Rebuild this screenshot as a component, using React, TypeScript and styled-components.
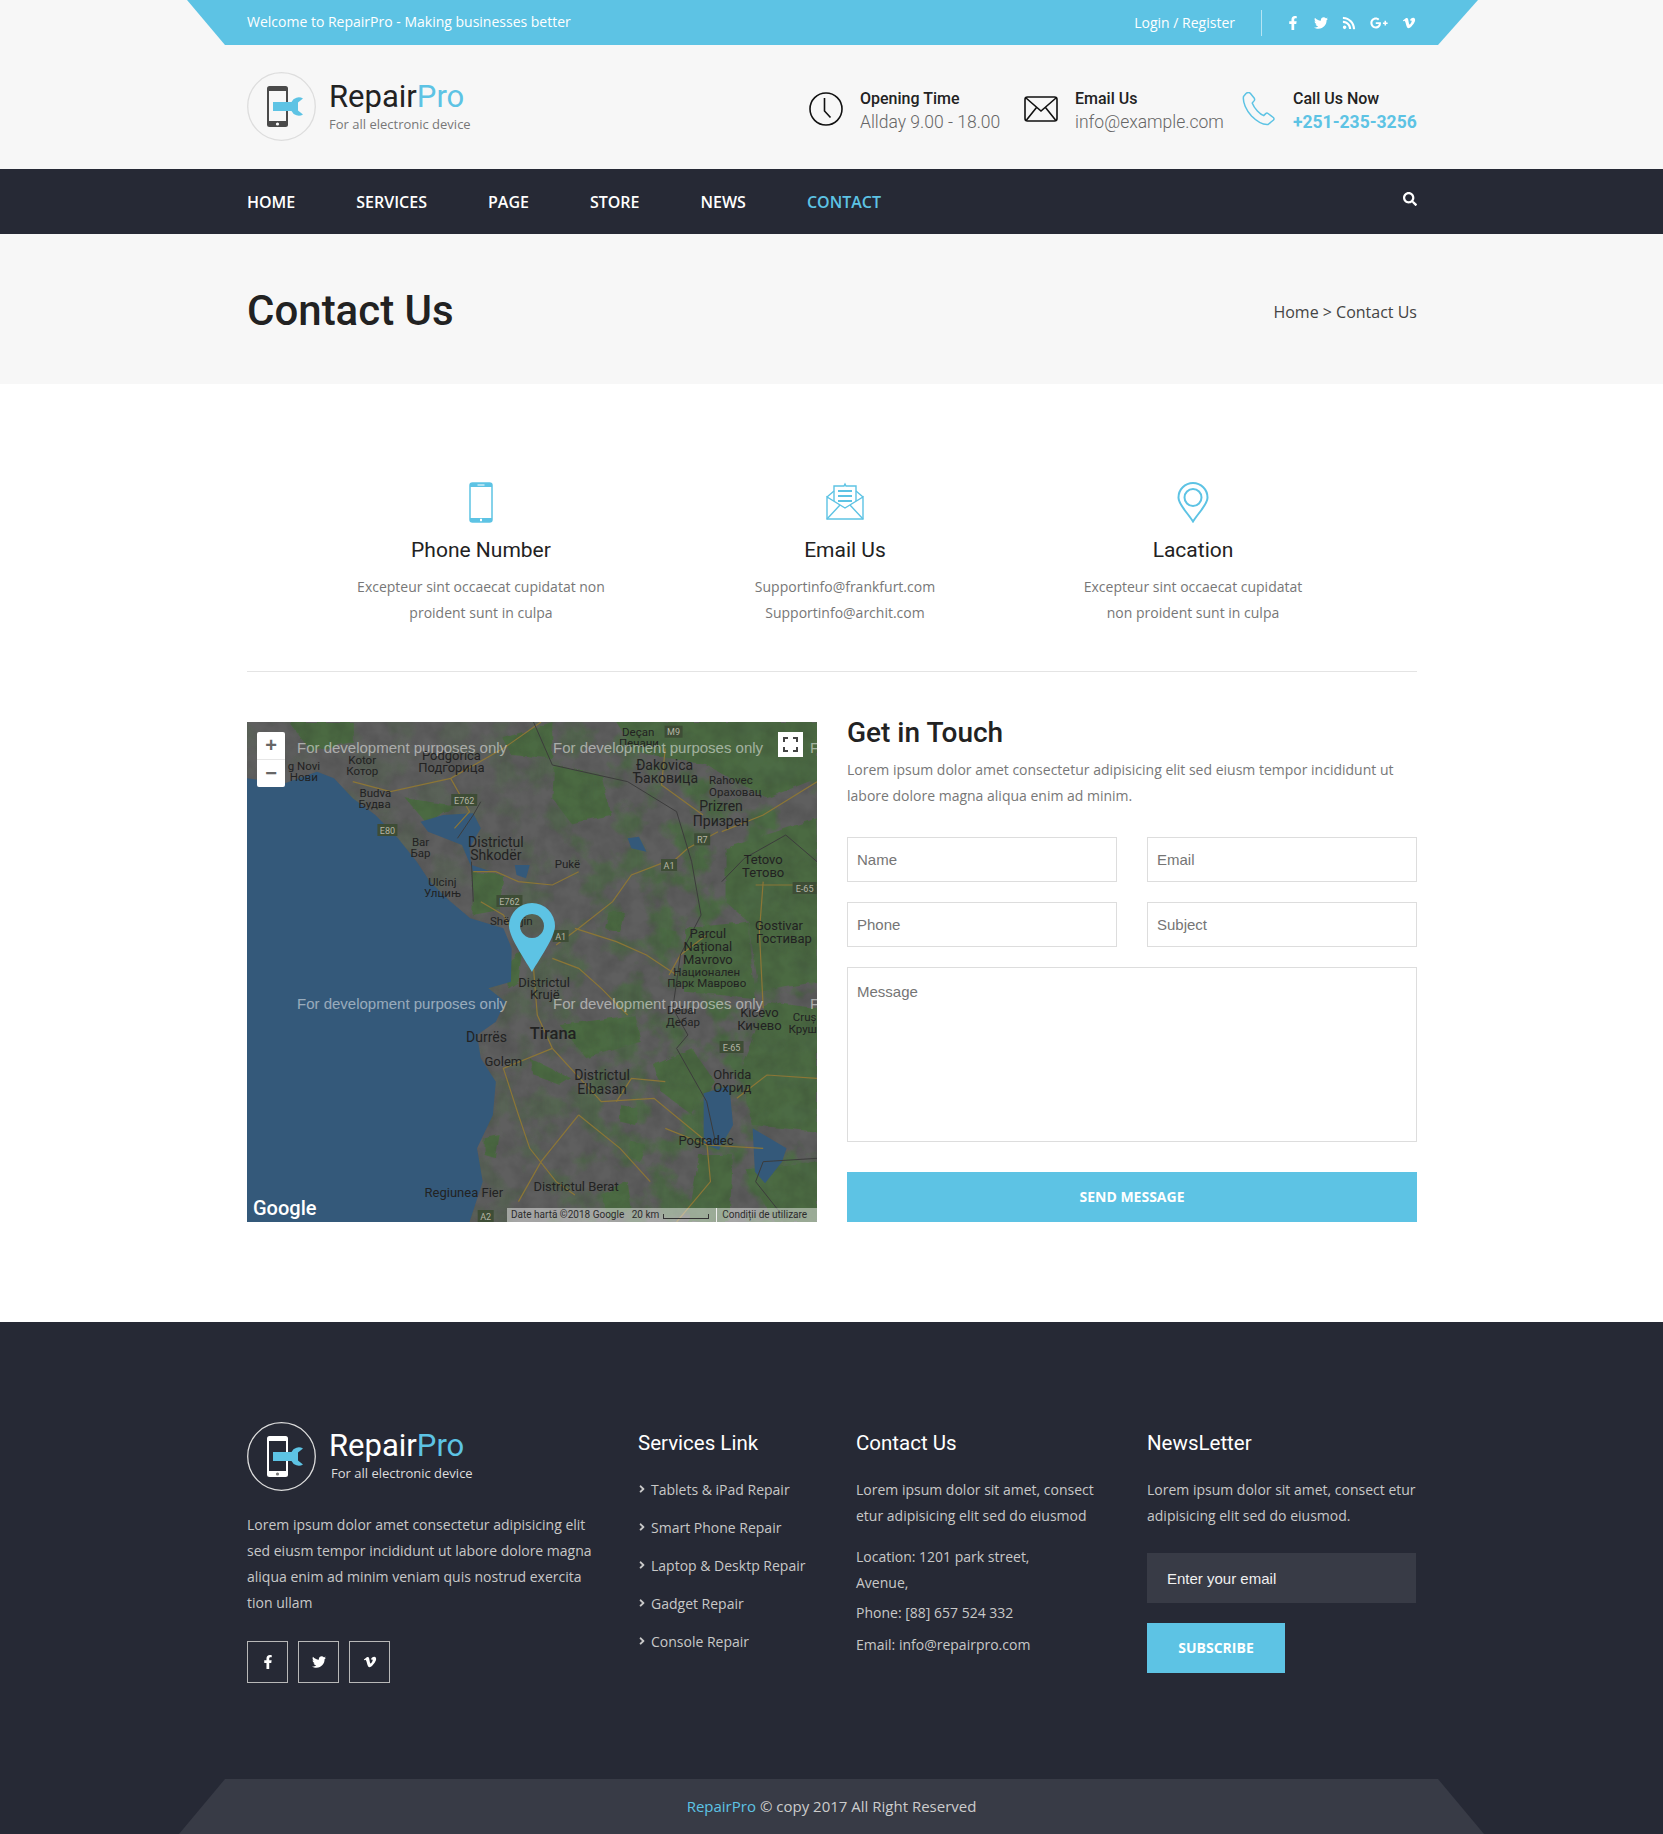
import React from "react"
import styled, { createGlobalStyle } from "styled-components"
import {
  FaAngleRight,
  FaFacebookF,
  FaGooglePlusG,
  FaRss,
  FaSearch,
  FaTwitter,
  FaVimeoV,
} from "react-icons/fa"

const cyan = "#5dc3e4"
const dark = "#262935"
const heading = `"Roboto", "Open Sans", sans-serif`

const GlobalStyle = createGlobalStyle`
  * { box-sizing: border-box; }
  body {
    margin: 0;
    background: #fff;
    color: #777;
    font-family: "Open Sans", sans-serif;
    font-size: 14px;
  }
  ul { list-style: none; margin: 0; padding: 0; }
  p, h1, h2, h3, h4 { margin: 0; }
`

const Page = styled.div`
  width: 1663px;
  height: 1834px;
  overflow: hidden;
`

const Container = styled.div`
  width: 1170px;
  margin-left: 247px;
`

/* top strip */
const TopArea = styled.div`
  background: #f7f7f7;
`

const TopBar = styled.div`
  width: 1291px;
  height: 45px;
  margin-left: 187px;
  padding: 0 62px 0 60px;
  display: flex;
  align-items: center;
  justify-content: space-between;
  background: ${cyan};
  color: #fff;
  clip-path: polygon(0 0, 100% 0, 1251px 100%, 38px 100%);
`

const Welcome = styled.span`
  margin-top: -2px;
`

const TopRight = styled.div`
  display: flex;
  align-items: center;
`

const Login = styled.span`
  padding-right: 26px;
  margin-right: 24px;
  line-height: 26px;
  border-right: 1px solid rgba(255, 255, 255, 0.55);
`

const TopIcons = styled.div`
  display: flex;
  align-items: center;
  gap: 14px;
  font-size: 14px;

  svg {
    display: block;
  }
`

const Header = styled(Container)`
  height: 124px;
  display: flex;
  align-items: center;
  justify-content: space-between;
`

const Brand = styled.div`
  display: flex;
  align-items: center;
  gap: 12px;
`

const BrandText = styled.div<{ $footer?: boolean }>`
  margin-top: ${(p) => (p.$footer ? "-6px" : "-4px")};

  strong {
    display: block;
    font-family: ${heading};
    font-size: 31px;
    font-weight: 400;
    line-height: 38px;
    color: ${(p) => (p.$footer ? "#fff" : "#222")};
  }

  strong span {
    color: ${cyan};
  }

  small {
    display: block;
    font-size: 13px;
    line-height: 16px;
    margin-left: ${(p) => (p.$footer ? "2px" : "0")};
    color: ${(p) => (p.$footer ? "#ddd" : "#777")};
  }
`

const HeaderInfo = styled.div`
  display: flex;
  align-items: center;
  margin-top: 3px;
`

const InfoItem = styled.div<{ $width: number }>`
  width: ${(p) => p.$width}px;
  display: flex;
  align-items: center;
`

const InfoIcon = styled.div`
  width: 51px;
  flex: none;

  svg {
    display: block;
  }
`

const InfoText = styled.div`
  margin-top: 4px;
  font-family: ${heading};

  b {
    display: block;
    font-size: 16px;
    line-height: 22px;
    font-weight: 500;
    color: #222;
  }

  span {
    display: block;
    font-size: 17.5px;
    line-height: 24px;
    font-weight: 300;
    color: #666;
    white-space: nowrap;
  }

  em {
    display: block;
    font-size: 17.5px;
    line-height: 24px;
    font-style: normal;
    font-weight: 700;
    color: ${cyan};
    white-space: nowrap;
  }
`

const NavBar = styled.nav`
  height: 65px;
  background: ${dark};
`

const NavInner = styled(Container)`
  height: 100%;
  display: flex;
  align-items: center;
  justify-content: space-between;
`

const NavList = styled.ul`
  display: flex;
  gap: 61px;
`

const NavItem = styled.li<{ $active?: boolean }>`
  font-size: 16px;
  font-weight: 600;
  color: ${(p) => (p.$active ? cyan : "#fff")};
`

const SearchBtn = styled.span`
  color: #fff;
  font-size: 14px;
  margin-top: -3px;
`

const TitleBand = styled.div`
  height: 150px;
  background: #f7f7f7;
`

const TitleInner = styled(Container)`
  height: 100%;
  display: flex;
  align-items: center;
  justify-content: space-between;
`

const PageTitle = styled.h1`
  margin-top: 3px;
  font-family: ${heading};
  font-size: 42px;
  font-weight: 500;
  color: #222;
`

const Crumb = styled.div`
  margin-top: 6px;
  font-size: 16px;
  color: #444;
`

/* contact cards */
const Features = styled(Container)`
  display: grid;
  grid-template-columns: 468px 260px 436px;
  padding-top: 98px;
  padding-bottom: 45px;
  border-bottom: 1px solid #e4e4e4;
`

const Feature = styled.div`
  text-align: center;

  svg {
    display: block;
    margin: 0 auto;
  }

  h3 {
    margin-top: 14px;
    font-family: ${heading};
    font-size: 21px;
    font-weight: 400;
    line-height: 26px;
    color: #222;
  }

  p {
    margin-top: 11px;
    line-height: 26px;
    color: #777;
  }
`

const ContactRow = styled(Container)`
  display: grid;
  grid-template-columns: 570px 570px;
  gap: 30px;
  padding-top: 50px;
  padding-bottom: 100px;
`

const MapBox = styled.div`
  position: relative;
  height: 500px;
  overflow: hidden;
  background: #606060;

  > svg {
    display: block;
  }
`

const ZoomControl = styled.div`
  position: absolute;
  left: 10px;
  top: 10px;
  width: 28px;
  height: 55px;
  display: flex;
  flex-direction: column;
  align-items: center;
  background: #fff;
  border-radius: 2px;
  color: #666;
  font: 700 20px/27px "Liberation Sans", sans-serif;

  span {
    width: 100%;
    flex: 1;
    text-align: center;
  }

  span + span {
    position: relative;
    border-top: 1px solid #e6e6e6;
  }
`

const FullScreen = styled.div`
  position: absolute;
  right: 14px;
  top: 10px;
  width: 25px;
  height: 25px;
  background: #fff;

  svg {
    display: block;
  }
`

const MapAttribution = styled.div`
  position: absolute;
  right: 0;
  bottom: 0;
  width: 310px;
  height: 14px;
  padding-left: 4px;
  display: flex;
  align-items: center;
  background: rgba(255, 255, 255, 0.45);
  color: #2c2c2c;
  font: 10px/14px "Roboto", sans-serif;
  white-space: nowrap;

  i {
    display: block;
    width: 46px;
    height: 5px;
    margin: 2px 7px 0 4px;
    border: 1px solid #333;
    border-top: 0;
  }

  u {
    text-decoration: none;
    padding-left: 5px;
    border-left: 1px solid #eee;
  }
`

const GoogleMark = styled.div`
  position: absolute;
  left: 6px;
  bottom: 2px;
  font: 500 20px/24px "Roboto", sans-serif;
  color: #fff;
`

const FormCol = styled.form`
  display: flex;
  flex-direction: column;
`

const FormTitle = styled.h2`
  font-family: ${heading};
  font-size: 28px;
  font-weight: 500;
  line-height: 22px;
  color: #222;
`

const FormText = styled.p`
  margin-top: 13px;
  line-height: 26px;
  color: #777;
`

const FieldGrid = styled.div`
  margin-top: 28px;
  display: grid;
  grid-template-columns: 270px 270px;
  gap: 20px 30px;
`

const Field = styled.input`
  height: 45px;
  padding: 0 9px;
  border: 1px solid #ddd;
  border-radius: 0;
  outline: 0;
  font: 15px "Liberation Sans", sans-serif;

  &::placeholder {
    color: #757575;
    opacity: 1;
  }
`

const MessageField = styled.textarea`
  grid-column: 1 / 3;
  height: 175px;
  padding: 15px 9px;
  resize: none;
  border: 1px solid #ddd;
  outline: 0;
  font: 15px "Liberation Sans", sans-serif;

  &::placeholder {
    color: #757575;
    opacity: 1;
  }
`

const SendButton = styled.button`
  margin-top: 30px;
  height: 50px;
  padding-bottom: 3px;
  border: 0;
  background: ${cyan};
  color: #fff;
  font: 700 14px "Open Sans", sans-serif;
`

/* footer */
const Footer = styled.footer`
  height: 512px;
  background: ${dark};
  color: #ccc;
`

const FooterGrid = styled(Container)`
  display: grid;
  grid-template-columns: 391px 218px 291px 270px;
  height: 457px;
  padding-top: 100px;
`

const FooterText = styled.p`
  line-height: 26px;
  color: #c8c8c8;
`

const FooterAbout = styled(FooterText)`
  width: 355px;
  margin-top: 20px;
`

const SocialRow = styled.div`
  margin-top: 25px;
  display: flex;
  gap: 10px;
`

const SocialBox = styled.span`
  width: 41px;
  height: 42px;
  display: flex;
  align-items: center;
  justify-content: center;
  border: 1px solid #b8b8b8;
  color: #fff;
  font-size: 14px;
`

const FooterHead = styled.h4`
  font-family: ${heading};
  font-size: 20.5px;
  font-weight: 400;
  line-height: 28px;
  margin-bottom: 20px;
  color: #fff;
`

const FooterColumn = styled.div`
  padding-top: 7px;
`

const LinkList = styled.ul`
  margin-top: -7px;
`

const LinkItem = styled.li`
  display: flex;
  align-items: center;
  gap: 3px;
  height: 38px;
  color: #c8c8c8;

  svg {
    font-size: 12px;
    margin-left: -2px;
  }
`

const FooterLine = styled.p<{ $gap: number }>`
  margin-top: ${(p) => p.$gap}px;
  line-height: 26px;
  color: #c8c8c8;
`

const EmailBox = styled.input`
  display: block;
  width: 269px;
  height: 50px;
  margin-top: 24px;
  padding: 0 20px;
  border: 0;
  outline: 0;
  border-radius: 0;
  background: #383b46;
  color: #eee;
  font: 15px "Liberation Sans", sans-serif;

  &::placeholder {
    color: #f0f0f0;
    opacity: 1;
  }
`

const SubscribeButton = styled.button`
  display: block;
  width: 138px;
  height: 50px;
  margin-top: 20px;
  padding-bottom: 3px;
  border: 0;
  background: ${cyan};
  color: #fff;
  font: 700 14px "Open Sans", sans-serif;
`

const Copyright = styled.div`
  height: 55px;
  padding-bottom: 2px;
  margin-left: 179px;
  width: 1305px;
  display: flex;
  align-items: center;
  justify-content: center;
  background: #383b46;
  color: #ccc;
  font-size: 15px;
  clip-path: polygon(46px 0, 1259px 0, 100% 100%, 0 100%);

  span {
    color: ${cyan};
    margin-right: 4px;
  }
`

type LogoProps = { $dark?: boolean }

const Logo = ({ $dark }: LogoProps) => (
  <svg width="70" height="70" viewBox="0 0 70 70">
    <circle cx="34.5" cy="34.5" r="33.8" fill="none" stroke="#ddd" strokeWidth="1.3" />
    <rect x="20" y="14" width="21" height="41" rx="2.5" fill={$dark ? "#fff" : "#4a4a4a"} />
    <rect x="22" y="19" width="17" height="30" fill={$dark ? dark : "#f7f7f7"} />
    <circle cx="30.5" cy="52" r="1.6" fill={$dark ? "#777" : "#fff"} />
    <path d="M26 30h18.500a8 8 0 0 1 11.500-3.500l-5 4v8l5 4a8 8 0 0 1-11.500-3.500H26z" fill={cyan} />
  </svg>
)

const ClockIcon = () => (
  <svg width="34" height="34" viewBox="0 0 34 34" fill="none" stroke="#111" strokeWidth="1.6">
    <circle cx="17" cy="17" r="16" />
    <path d="M15.5 6v13l6 6.5" />
  </svg>
)

const MailIcon = () => (
  <svg width="34" height="26" viewBox="0 0 34 26" fill="none" stroke="#111" strokeWidth="1.6">
    <rect x="1" y="1" width="32" height="24" rx="2.5" />
    <path d="M2 2l15 13L32 2M2.5 24l10-12.5M31.500 24l-10-12.500" />
  </svg>
)

const PhoneIcon = () => (
  <svg width="34" height="34" viewBox="0 0 34 34" fill="none" stroke={cyan} strokeWidth="1.5">
    <path d="M4 1.500 1.500 4.500c-1 6 3 14 8 19.500 5 5 11 9 16.500 8.500l5.500-4.500c.8-.8.6-1.800-.2-2.500l-5.300-4c-.8-.6-1.600-.5-2.300.1l-2 2c-3.500-1-9.500-7-11.500-12.500l2-2.500c.6-.8.6-1.500.1-2.300L8.500 1.500C7.500.4 5.500.4 4 1.500z" />
  </svg>
)

const MobileIcon = () => (
  <svg width="24" height="41" viewBox="0 0 24 41">
    <rect x="1" y="1" width="22" height="39" rx="2.500" fill="none" stroke={cyan} strokeWidth="1.5" />
    <path d="M1 3.500A2.500 2.500 0 0 1 3.500 1h17A2.500 2.500 0 0 1 23 3.500V5H1zM1 36h22v1.500a2.500 2.500 0 0 1-2.500 2.500h-17A2.500 2.500 0 0 1 1 37.500z" fill={cyan} />
    <rect x="8.500" y="2.500" width="7" height="1" fill="#fff" />
    <rect x="11" y="36.800" width="2" height="2.400" fill="#fff" />
  </svg>
)

const EnvelopeOpenIcon = () => (
  <svg width="38" height="41" viewBox="0 0 38 41" fill="none" stroke={cyan} strokeWidth="1.4">
    <path d="M1 15v22h36V15L19 26z" />
    <path d="M1 37l13-14M37 37 24 23" />
    <path d="M1 15l7-6M37 15l-7-6" />
    <path d="M8 19V4h10l1-2 1 2h10v15" />
    <path d="M12 9h14M12 14h14M12 19h14" strokeWidth="2" />
  </svg>
)

const LocationIcon = () => (
  <svg width="32" height="41" viewBox="0 0 32 41" fill="none" stroke={cyan} strokeWidth="2">
    <path d="M16 39.500C10 30 1 22 1.500 15.500a14.500 14.500 0 0 1 29 0C31 22 22 30 16 39.500z" />
    <circle cx="16" cy="15.500" r="8.500" />
  </svg>
)

const FullScreenIcon = () => (
  <svg width="25" height="25" viewBox="0 0 25 25" fill="none" stroke="#444" strokeWidth="2">
    <path d="M6 10V6h4M15 6h4v4M19 15v4h-4M10 19H6v-4" />
  </svg>
)

/* map data is in the coordinates of a 1514x1500 working grid, scaled to 570x500 */
const mx = (x: number) => (x - 19) * 0.3765
const my = (y: number) => (y - 21) / 3

const seaShape =
  "19,190 120,205 205,170 250,190 300,250 360,300 420,370 470,440 505,500 560,560 612,610 700,640 722,700 720,800 660,820 705,860 680,920 630,960 640,1030 680,1100 672,1200 630,1300 645,1400 610,1521 19,1521"

const lakes = [
  "480,320 540,300 620,295 640,340 610,400 615,450 670,470 620,470 590,390 500,350",
  "1232,1135 1300,1112 1310,1230 1272,1305 1232,1285",
  "1362,1240 1452,1300 1440,1340 1395,1405 1368,1370",
  "1030,370 1060,365 1080,410 1040,400",
  "730,450 770,450 760,490 735,480",
]

const greens = [
  "835,150 960,180 985,300 880,325 830,250",
  "1000,21 1533,21 1533,190 1400,250 1240,150 1050,110",
  "1290,400 1533,310 1533,800 1380,830 1350,620 1290,560",
  "1180,640 1350,620 1370,850 1180,830",
  "618,470 700,480 690,585 618,600",
  "850,930 1050,900 1065,980 920,1030",
  "1100,1050 1200,1000 1262,1100 1200,1200 1120,1130",
  "1400,860 1533,880 1533,1250 1360,1230 1330,1060",
  "1340,1360 1533,1340 1533,1521 1420,1521",
  "440,250 560,270 620,230 500,330",
  "980,590 1020,590 1010,650 970,640",
  "1120,640 1160,650 1140,700 1115,680",
  "770,1030 880,1090 850,1110 780,1080",
  "1010,1170 1060,1180 1050,1230 1010,1220",
  "650,1270 690,1260 680,1330 650,1320",
  "130,21 300,21 300,80 190,110",
  "700,70 830,21 830,130 720,120",
  "705,760 750,700 740,800 715,820",
  "1040,1280 1080,1290 1060,1340 1030,1320",
  "960,1440 1030,1400 1040,1480 980,1521",
  "1220,1320 1310,1320 1300,1521 1190,1521",
]

const roads = [
  "1120,445 1040,480 990,560 900,640 840,690",
  "1140,450 1190,400 1270,350",
  "620,470 680,470 740,500 830,510 900,470",
  "560,190 610,290 570,340",
  "300,200 400,230 560,190 700,100 800,21",
  "780,760 790,900 830,1000 960,1160 1100,1150 1240,1280",
  "830,1000 700,1060 740,1200 770,1300 840,1400 890,1440",
  "890,640 1000,680 1080,720 1160,780",
  "1390,500 1380,650 1390,880",
  "1370,510 1533,510",
  "900,1200 1010,1300 1090,1400",
  "740,1460 800,1340 900,1200",
  "1160,1521 1250,1400 1240,1280",
  "1130,1240 1240,1290 1390,1300",
  "1130,100 1120,210 1230,300",
  "1280,350 1390,300 1533,200",
  "830,730 900,760 960,820 1030,900",
  "1240,660 1170,720 1140,780",
  "1000,1160 1040,1090 1130,1100",
  "1320,1150 1400,1080 1533,1090",
  "640,560 700,600 720,640",
]

const borders = [
  "1030,200 1160,290 1200,440 1225,600 1170,720 1150,880 1190,960 1160,1000 1240,1160 1265,1290",
  "780,21 830,150 1030,200",
  "578,370 620,300 640,260",
  "615,440 620,560",
  "1533,1330 1390,1340 1370,1400 1440,1500",
  "1280,500 1340,430 1450,360 1533,440",
]

const labels: [string, number, number, number?, number?][] = [
  ["Podgorica", 562, 122], ["Подгорица", 562, 160], ["Kotor", 325, 135, 11.5], ["Котор", 325, 168, 11.5],
  ["Budva", 360, 233, 11.5], ["Будва", 358, 267, 11.5], ["g Novi", 170, 153, 11.5], ["Нови", 170, 187, 11.5],
  ["Bar", 480, 382, 11.5], ["Бар", 480, 414, 11.5], ["Ulcinj", 538, 500, 11.5], ["Улцињ", 538, 535, 11.5],
  ["Districtul", 680, 384, 14], ["Shkodër", 680, 424, 14], ["Pukë", 870, 447, 11.5],
  ["Shë", 690, 618, 11.5], ["jin", 762, 618, 11.5], ["Deçan", 1058, 52, 11.5], ["Печани", 1060, 85, 11.5],
  ["Đakovica", 1128, 153, 14], ["Ђаковица", 1130, 193, 14], ["Rahovec", 1304, 195, 11.5], ["Ораховац", 1316, 232, 11.5],
  ["Prizren", 1278, 277, 14], ["Призрен", 1278, 320, 14], ["Tetovo", 1390, 435], ["Тетово", 1390, 475],
  ["Gostivar", 1432, 633], ["Гостивар", 1445, 673], ["Parcul", 1243, 657], ["Național", 1243, 696],
  ["Mavrovo", 1243, 736], ["Национален", 1240, 772, 11.5], ["Парк Маврово", 1240, 804, 11.5],
  ["Districtul", 808, 804], ["Krujë", 810, 840], ["Debar", 1175, 885, 11.5], ["Дебар", 1177, 922, 11.5],
  ["Kicevo", 1380, 895], ["Кичево", 1380, 933], ["Cruș", 1500, 907, 11.5], ["Круш", 1495, 943, 11.5],
  ["Durrës", 655, 968, 14], ["Tirana", 832, 960, 16.5, 500], ["Golem", 700, 1042], ["Districtul", 962, 1083, 14],
  ["Elbasan", 962, 1126, 14], ["Ohrida", 1308, 1080], ["Охрид", 1308, 1120], ["Pogradec", 1238, 1278],
  ["Regiunea Fier", 595, 1435], ["Districtul Berat", 893, 1415],
]

const shields: [string, number, number, number][] = [
  ["E762", 596, 255, 26], ["E80", 392, 345, 20], ["M9", 1152, 50, 18], ["R7", 1228, 373, 16],
  ["A1", 1140, 450, 16], ["E-65", 1500, 519, 24], ["E762", 716, 558, 26], ["A1", 852, 663, 16],
  ["E-65", 1306, 996, 24], ["A2", 653, 1503, 16],
]

const watermarks: [number, number][] = [
  [50, 26], [306, 26], [50, 282], [306, 282], [563, 26], [563, 282],
]

const MapArt = () => (
  <svg width="570" height="500" viewBox="0 0 570 500">
    <defs>
      <filter id="rough" x="-5%" y="-5%" width="110%" height="110%">
        <feTurbulence type="fractalNoise" baseFrequency="0.035" numOctaves="3" seed="4" />
        <feDisplacementMap in="SourceGraphic" scale="14" />
      </filter>
      <filter id="shade" colorInterpolationFilters="sRGB">
        <feTurbulence type="fractalNoise" baseFrequency="0.06" numOctaves="3" seed="9" />
        <feColorMatrix values="0 0 0 0 0.15 0 0 0 0 0.15 0 0 0 0 0.15 0 0 0 1.1 -0.35" />
      </filter>
      <filter id="blotch" colorInterpolationFilters="sRGB">
        <feTurbulence type="fractalNoise" baseFrequency="0.03" numOctaves="4" seed="21" />
        <feColorMatrix values="0 0 0 0 0.3 0 0 0 0 0.42 0 0 0 0 0.27 5 0 0 0 -2.3" />
      </filter>
      <linearGradient id="eastward" x1="0" x2="1" y1="0" y2="0">
        <stop offset="0.4" stopColor="#fff" stopOpacity="0.25" />
        <stop offset="0.8" stopColor="#fff" stopOpacity="1" />
      </linearGradient>
      <mask id="eastMask">
        <rect width="570" height="500" fill="url(#eastward)" />
      </mask>
    </defs>
    <rect width="570" height="500" fill="#5f5f5f" />
    <g transform="scale(0.3765 0.33333) translate(-19 -21)">
      <g filter="url(#rough)" fill="#4c6b42">
        {greens.map((g) => (
          <polygon key={g} points={g} />
        ))}
      </g>
    </g>
    <g mask="url(#eastMask)">
      <rect width="570" height="500" filter="url(#blotch)" />
    </g>
    <rect width="570" height="500" filter="url(#shade)" opacity="0.3" />
    <g transform="scale(0.3765 0.33333) translate(-19 -21)">
      <polygon points={seaShape} fill="#34597a" />
      {lakes.map((l) => (
        <polygon key={l} points={l} fill="#34597a" />
      ))}
      {roads.map((r) => (
        <polyline key={r} points={r} fill="none" stroke="#8c7636" strokeWidth="1.2" vectorEffect="non-scaling-stroke" />
      ))}
      {borders.map((b) => (
        <polyline key={b} points={b} fill="none" stroke="#3c3c3c" strokeWidth="1" vectorEffect="non-scaling-stroke" />
      ))}
    </g>
    {shields.map(([t, x, y, w]) => (
      <g key={t + x}>
        <rect x={mx(x) - w / 2} y={my(y) - 6} width={w} height="12" fill="#3e4d36" />
        <text x={mx(x)} y={my(y) + 3.500} textAnchor="middle" fontSize="9" fontFamily="Roboto, sans-serif" fill="#b5b5a5">
          {t}
        </text>
      </g>
    ))}
    {labels.map(([t, x, y, s, w]) => (
      <text
        key={t + x}
        x={mx(x)}
        y={my(y) + 4}
        textAnchor="middle"
        fontSize={s ?? 13}
        fontWeight={w ?? 400}
        fontFamily="Roboto, sans-serif"
        fill="#222"
      >
        {t}
      </text>
    ))}
    {watermarks.map(([x, y]) => (
      <text
        key={`${x}-${y}`}
        x={x}
        y={y + 5}
        fontSize="15"
        fontFamily="'Liberation Sans', sans-serif"
        fill="#fff"
        fillOpacity="0.5"
      >
        {x > 500 ? "F" : "For development purposes only"}
      </text>
    ))}
    <path
      fillRule="evenodd"
      d="M285 250c-4-8-23-34-23-46a23 23 0 0 1 46 0c0 12-19 38-23 46zM285 192a12 12 0 1 0 .01 0z"
      fill={cyan}
    />
  </svg>
)

const App: React.FC = () => {
  return (
    <Page>
      <GlobalStyle />
      <TopArea>
        <TopBar>
          <Welcome>Welcome to RepairPro - Making businesses better</Welcome>
          <TopRight>
            <Login>Login / Register</Login>
            <TopIcons>
              <FaFacebookF />
              <FaTwitter />
              <FaRss />
              <FaGooglePlusG size={18} />
              <FaVimeoV />
            </TopIcons>
          </TopRight>
        </TopBar>
        <Header>
          <Brand>
            <Logo />
            <BrandText>
              <strong>
                Repair<span>Pro</span>
              </strong>
              <small>For all electronic device</small>
            </BrandText>
          </Brand>
          <HeaderInfo>
            <InfoItem $width={215}>
              <InfoIcon>
                <ClockIcon />
              </InfoIcon>
              <InfoText>
                <b>Opening Time</b>
                <span>Allday 9.00 - 18.00</span>
              </InfoText>
            </InfoItem>
            <InfoItem $width={218}>
              <InfoIcon>
                <MailIcon />
              </InfoIcon>
              <InfoText>
                <b>Email Us</b>
                <span>info@example.com</span>
              </InfoText>
            </InfoItem>
            <InfoItem $width={175}>
              <InfoIcon>
                <PhoneIcon />
              </InfoIcon>
              <InfoText>
                <b>Call Us Now</b>
                <em>+251-235-3256</em>
              </InfoText>
            </InfoItem>
          </HeaderInfo>
        </Header>
      </TopArea>

      <NavBar>
        <NavInner>
          <NavList>
            <NavItem>HOME</NavItem>
            <NavItem>SERVICES</NavItem>
            <NavItem>PAGE</NavItem>
            <NavItem>STORE</NavItem>
            <NavItem>NEWS</NavItem>
            <NavItem $active>CONTACT</NavItem>
          </NavList>
          <SearchBtn>
            <FaSearch />
          </SearchBtn>
        </NavInner>
      </NavBar>

      <TitleBand>
        <TitleInner>
          <PageTitle>Contact Us</PageTitle>
          <Crumb>Home &gt; Contact Us</Crumb>
        </TitleInner>
      </TitleBand>

      <Features>
        <Feature>
          <MobileIcon />
          <h3>Phone Number</h3>
          <p>
            Excepteur sint occaecat cupidatat non
            <br />
            proident sunt in culpa
          </p>
        </Feature>
        <Feature>
          <EnvelopeOpenIcon />
          <h3>Email Us</h3>
          <p>
            Supportinfo@frankfurt.com
            <br />
            Supportinfo@archit.com
          </p>
        </Feature>
        <Feature>
          <LocationIcon />
          <h3>Lacation</h3>
          <p>
            Excepteur sint occaecat cupidatat
            <br />
            non proident sunt in culpa
          </p>
        </Feature>
      </Features>

      <ContactRow>
        <MapBox>
          <MapArt />
          <ZoomControl>
            <span>+</span>
            <span>−</span>
          </ZoomControl>
          <FullScreen>
            <FullScreenIcon />
          </FullScreen>
          <GoogleMark>Google</GoogleMark>
          <MapAttribution>
            Date hartă ©2018 Google&nbsp;&nbsp;&nbsp;20 km
            <i />
            <u>Condiții de utilizare</u>
          </MapAttribution>
        </MapBox>
        <FormCol>
          <FormTitle>Get in Touch</FormTitle>
          <FormText>
            Lorem ipsum dolor amet consectetur adipisicing elit sed eiusm tempor incididunt ut labore dolore magna
            aliqua enim ad minim.
          </FormText>
          <FieldGrid>
            <Field placeholder="Name" />
            <Field placeholder="Email" />
            <Field placeholder="Phone" />
            <Field placeholder="Subject" />
            <MessageField placeholder="Message" />
          </FieldGrid>
          <SendButton type="button">SEND MESSAGE</SendButton>
        </FormCol>
      </ContactRow>

      <Footer>
        <FooterGrid>
          <div>
            <Brand>
              <Logo $dark />
              <BrandText $footer>
                <strong>
                  Repair<span>Pro</span>
                </strong>
                <small>For all electronic device</small>
              </BrandText>
            </Brand>
            <FooterAbout>
              Lorem ipsum dolor amet consectetur adipisicing elit sed eiusm tempor incididunt ut labore dolore magna
              aliqua enim ad minim veniam quis nostrud exercita tion ullam
            </FooterAbout>
            <SocialRow>
              <SocialBox>
                <FaFacebookF />
              </SocialBox>
              <SocialBox>
                <FaTwitter />
              </SocialBox>
              <SocialBox>
                <FaVimeoV />
              </SocialBox>
            </SocialRow>
          </div>
          <FooterColumn>
            <FooterHead>Services Link</FooterHead>
            <LinkList>
              {["Tablets & iPad Repair", "Smart Phone Repair", "Laptop & Desktp Repair", "Gadget Repair", "Console Repair"].map(
                (item) => (
                  <LinkItem key={item}>
                    <FaAngleRight />
                    {item}
                  </LinkItem>
                ),
              )}
            </LinkList>
          </FooterColumn>
          <FooterColumn>
            <FooterHead>Contact Us</FooterHead>
            <FooterText>
              Lorem ipsum dolor sit amet, consect
              <br />
              etur adipisicing elit sed do eiusmod
            </FooterText>
            <FooterLine $gap={15}>
              Location: 1201 park street,
              <br />
              Avenue,
            </FooterLine>
            <FooterLine $gap={4}>Phone: [88] 657 524 332</FooterLine>
            <FooterLine $gap={6}>Email: info@repairpro.com</FooterLine>
          </FooterColumn>
          <FooterColumn>
            <FooterHead>NewsLetter</FooterHead>
            <FooterText>
              Lorem ipsum dolor sit amet, consect etur
              <br />
              adipisicing elit sed do eiusmod.
            </FooterText>
            <EmailBox placeholder="Enter your email" />
            <SubscribeButton type="button">SUBSCRIBE</SubscribeButton>
          </FooterColumn>
        </FooterGrid>
        <Copyright>
          <span>RepairPro</span> © copy 2017 All Right Reserved
        </Copyright>
      </Footer>
    </Page>
  )
}

export default App
